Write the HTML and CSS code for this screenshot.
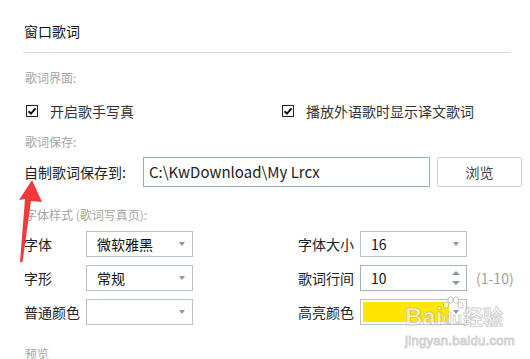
FILE: index.html
```html
<!DOCTYPE html>
<html lang="zh-CN">
<head>
    <meta charset="UTF-8">
    <title>窗口歌词</title>
    <link rel="stylesheet" href="styles.css">
</head>
<body>
    <div class="panel">
        <h1 class="title">窗口歌词</h1>

        <div class="group-label group-label-first">歌词界面:</div>
        <div class="check-row">
            <label class="check-item check-item-wide">
                <span class="checkbox">
                    <svg width="10" height="10" viewBox="0 0 10 10"><path d="M1.5 5.2 L4 7.6 L8.6 2.4" fill="none" stroke="#111" stroke-width="2"/></svg>
                </span>
                开启歌手写真
            </label>
            <label class="check-item">
                <span class="checkbox">
                    <svg width="10" height="10" viewBox="0 0 10 10"><path d="M1.5 5.2 L4 7.6 L8.6 2.4" fill="none" stroke="#111" stroke-width="2"/></svg>
                </span>
                播放外语歌时显示译文歌词
            </label>
        </div>

        <div class="group-label">歌词保存:</div>
        <div class="save-row">
            <span class="save-label">自制歌词保存到:</span>
            <div class="path-input">C:\KwDownload\My Lrcx</div>
            <button class="browse-btn">浏览</button>
        </div>

        <div class="group-label group-label-font">字体样式 (歌词写真页):</div>
        <div class="fields">
            <div class="field-col field-col-left">
                <div class="field">
                    <span class="field-label">字体</span>
                    <div class="dropdown">微软雅黑</div>
                </div>
                <div class="field">
                    <span class="field-label">字形</span>
                    <div class="dropdown">常规</div>
                </div>
                <div class="field">
                    <span class="field-label">普通颜色</span>
                    <div class="dropdown"></div>
                </div>
            </div>
            <div class="field-col">
                <div class="field">
                    <span class="field-label">字体大小</span>
                    <div class="dropdown">16</div>
                </div>
                <div class="field">
                    <span class="field-label">歌词行间</span>
                    <div class="spinner">10</div>
                    <span class="range-hint">(1-10)</span>
                </div>
                <div class="field">
                    <span class="field-label">高亮颜色</span>
                    <div class="dropdown dropdown-color"><span class="color-fill"></span></div>
                </div>
            </div>
        </div>

        <div class="group-label group-label-preview">预览</div>
    </div>

    <!-- red annotation arrow -->
    <svg class="arrow" width="50" height="90" viewBox="0 0 50 90">
        <polygon points="32,0 19,20 25,19 20,82 22.5,82 31,21 42,22" fill="#f23a3a"/>
    </svg>

    <div class="watermark">
        <div class="wm-logo">
            <span class="wm-bai">Bai</span>
            <span class="wm-paw">
                <svg width="22" height="20" viewBox="0 0 22 20">
                    <g fill="rgba(255,255,255,0.75)" stroke="rgba(160,160,160,0.6)" stroke-width="1">
                        <ellipse cx="4" cy="9" rx="2.6" ry="3.2"/>
                        <ellipse cx="8.5" cy="4" rx="2.6" ry="3.2"/>
                        <ellipse cx="14" cy="4" rx="2.6" ry="3.2"/>
                        <ellipse cx="18.5" cy="9" rx="2.6" ry="3.2"/>
                    </g>
                </svg>
                <span class="wm-du">du</span>
            </span>
            <span class="wm-cn">经验</span>
        </div>
        <div class="wm-url">jingyan.baidu.com</div>
    </div>
</body>
</html>
```

FILE: styles.css
```css
* {
    margin: 0;
    padding: 0;
    box-sizing: border-box;
}

body {
    width: 530px;
    height: 359px;
    overflow: hidden;
    background: #ffffff;
    font-family: "Noto Sans CJK SC", "Noto Sans", sans-serif;
    color: #333333;
    position: relative;
}

.panel {
    padding: 20px 20px 0 23px;
}

.title {
    font-size: 14px;
    font-weight: normal;
    line-height: 22px;
    color: #111111;
    padding: 0 0 10px 1px;
    border-bottom: 1px solid #d9d9d9;
}

.group-label {
    font-size: 12px;
    line-height: 20px;
    color: #a5a5a5;
    padding-left: 2px;
    margin-top: 11px;
}

.group-label-first {
    margin-top: 15px;
}

.group-label-font {
    margin-top: 18px;
}

.group-label-preview {
    margin-top: 19px;
}

.check-row {
    display: flex;
    margin-top: 13px;
    height: 20px;
    align-items: center;
}

.check-item {
    display: flex;
    align-items: center;
    gap: 12px;
    font-size: 14px;
    color: #333333;
    padding-left: 3px;
    white-space: nowrap;
}

.check-item-wide {
    width: 256px;
    flex-shrink: 0;
}

.checkbox {
    width: 12px;
    height: 12px;
    border: 1px solid #222222;
    display: flex;
    align-items: center;
    justify-content: center;
    background: #ffffff;
}

.save-row {
    display: flex;
    align-items: center;
    margin-top: 5px;
    height: 30px;
}

.save-label {
    width: 120px;
    flex-shrink: 0;
    font-size: 14px;
    color: #222222;
    padding-left: 1px;
    white-space: nowrap;
}

.path-input {
    width: 287px;
    flex-shrink: 0;
    height: 30px;
    border: 1px solid #8fb0c6;
    font-size: 15px;
    line-height: 28px;
    padding-left: 5px;
    color: #222222;
    white-space: nowrap;
}

.browse-btn {
    width: 85px;
    flex-shrink: 0;
    height: 30px;
    margin-left: 7px;
    border: 1px solid #cfcfcf;
    border-radius: 2px;
    background: #ffffff;
    font-family: inherit;
    font-size: 14px;
    color: #444444;
}

.fields {
    display: flex;
    margin-top: 6px;
}

.field-col {
    display: flex;
    flex-direction: column;
    gap: 8px;
    flex-shrink: 0;
}

.field-col-left {
    width: 274px;
}

.field {
    display: flex;
    align-items: center;
    height: 26px;
    white-space: nowrap;
}

.field-label {
    width: 63px;
    flex-shrink: 0;
    font-size: 14px;
    color: #222222;
    padding-left: 1px;
}

.dropdown,
.spinner {
    position: relative;
    width: 107px;
    flex-shrink: 0;
    height: 26px;
    border: 1px solid #b8c2cc;
    font-size: 14px;
    line-height: 24px;
    padding-left: 10px;
    color: #111111;
}

.dropdown::after {
    content: "";
    position: absolute;
    right: 7px;
    top: 10px;
    border-left: 3.5px solid transparent;
    border-right: 3.5px solid transparent;
    border-top: 4px solid #8a98a8;
}

.spinner {
    border-color: #9fb2c6;
}

.spinner::before,
.spinner::after {
    content: "";
    position: absolute;
    right: 6px;
    border-left: 4px solid transparent;
    border-right: 4px solid transparent;
}

.spinner::before {
    top: 5px;
    border-bottom: 4px solid #8a98a8;
}

.spinner::after {
    top: 15px;
    border-top: 4px solid #8a98a8;
}

.range-hint {
    margin-left: 9px;
    font-size: 14px;
    color: #a0a0a0;
}

.dropdown-color {
    padding: 2px;
}

.color-fill {
    display: block;
    width: 86px;
    height: 20px;
    background: #ffe600;
}

.arrow {
    position: absolute;
    left: 0;
    top: 180px;
}

.watermark {
    position: absolute;
    left: 405px;
    top: 300px;
    color: rgba(255, 255, 255, 0.6);
    -webkit-text-stroke: 1px rgba(170, 170, 170, 0.55);
    font-family: "Liberation Sans", sans-serif;
}

.wm-logo {
    display: flex;
    align-items: flex-end;
    height: 30px;
    font-size: 24px;
    font-weight: bold;
    line-height: 26px;
}

.wm-paw {
    position: relative;
    display: flex;
    flex-direction: column;
    align-items: center;
}

.wm-paw svg {
    position: absolute;
    top: -14px;
    left: 0;
}

.wm-du {
    font-size: 16px;
    line-height: 18px;
    padding-bottom: 2px;
}

.wm-cn {
    font-family: "Noto Sans CJK SC", sans-serif;
    font-size: 20px;
    margin-left: 1px;
}

.wm-url {
    font-size: 13px;
    line-height: 18px;
    margin-top: 2px;
    letter-spacing: 0.3px;
}
```
